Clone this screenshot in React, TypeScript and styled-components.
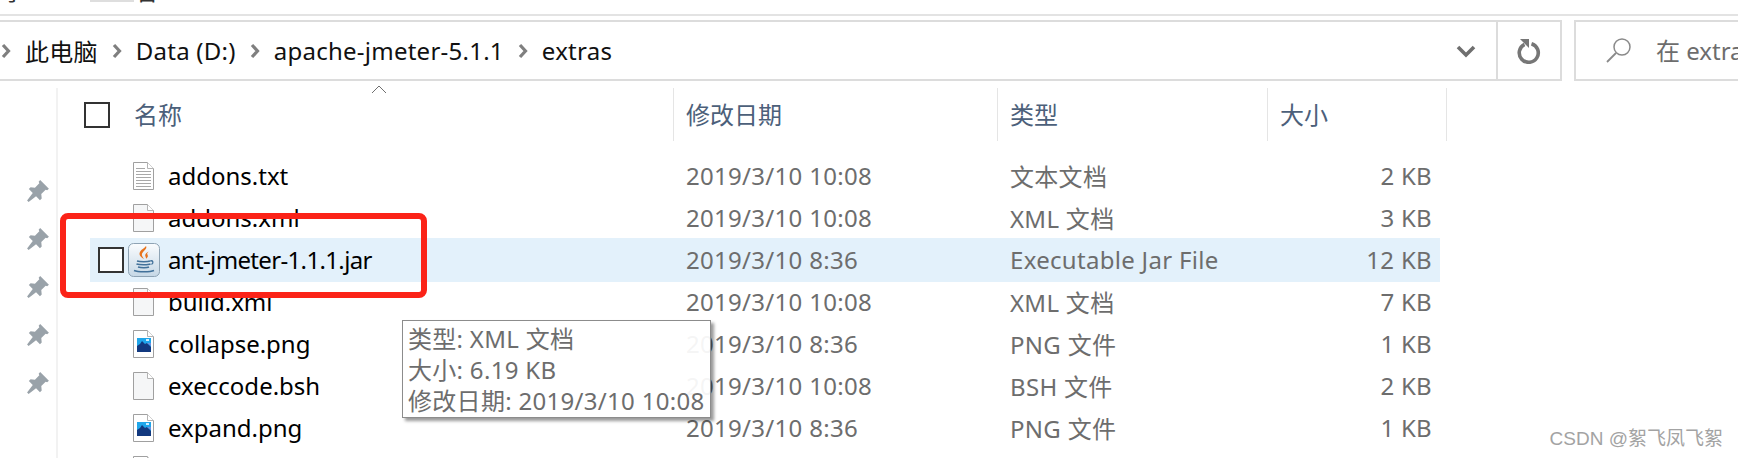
import React from 'react';
import styled, { createGlobalStyle } from 'styled-components';

const GlobalStyle = createGlobalStyle`
  html, body {
    margin: 0;
    padding: 0;
    background: #ffffff;
  }
  body {
    width: 1738px;
    height: 458px;
    overflow: hidden;
    font-family: "Noto Sans", "Noto Sans CJK SC", sans-serif;
  }
`;

const Page = styled.div`
  position: relative;
  width: 1738px;
  height: 458px;
  overflow: hidden;
  background: #fff;
`;

const Ribbon = styled.div`
  height: 14px;
  border-bottom: 2px solid #e3e3e3;
  display: flex;
  padding-left: 2px;
  overflow: hidden;
  font-size: 24px;
  line-height: 24px;
  color: #333;
`;

const RibbonLabel = styled.span`
  margin-top: -21px;
  width: 88px;
`;

const RibbonTab = styled.span`
  height: 2px;
  width: 44px;
  background: #dedede;
`;

const AddressRow = styled.div`
  display: flex;
  height: 61px;
  margin-top: 4px;
  gap: 12px;
`;

const Breadcrumb = styled.div`
  width: 1564px;
  margin-left: -2px;
  box-sizing: border-box;
  border: 2px solid #dcdcdc;
  display: flex;
  align-items: center;
`;

const Crumbs = styled.div`
  flex: 1;
  display: flex;
  align-items: center;
  gap: 14px;
  padding: 0 0 0 1px;
  font-size: 24px;
  letter-spacing: 0.25px;
  color: #111;
`;

const CrumbArrow = styled.svg`
  width: 10px;
  height: 16px;
  flex: none;
`;

const DropButton = styled.div`
  width: 60px;
  display: flex;
  justify-content: center;
`;

const RefreshButton = styled.div`
  width: 62px;
  align-self: stretch;
  border-left: 2px solid #dcdcdc;
  display: flex;
  align-items: center;
  justify-content: center;
`;

const SearchBox = styled.div`
  flex: 1;
  box-sizing: border-box;
  border: 2px solid #dcdcdc;
  border-right: none;
  display: flex;
  align-items: center;
  padding: 0 0 2px 30px;
  gap: 24px;
  font-size: 24px;
  color: #6d6d6d;
  white-space: nowrap;
  overflow: hidden;
`;

const SearchIcon = styled.svg`
  width: 26px;
  height: 26px;
  flex: none;
`;

const Body = styled.div`
  display: flex;
  margin-top: 7px;
`;

const NavRail = styled.div`
  width: 58px;
  height: 370px;
  flex: none;
  border-right: 2px solid #f2f2f2;
  display: flex;
  flex-direction: column;
  gap: 24px;
  padding: 91px 0 0 26px;
  box-sizing: border-box;
  margin-right: 32px;
`;

const PinIcon = styled.svg`
  width: 24px;
  height: 24px;
  flex: none;
`;

const List = styled.div`
  width: 1350px;
`;

const columns = '583px 324px 270px 173px';

const HeaderRow = styled.div`
  display: grid;
  grid-template-columns: ${columns};
  height: 53px;
  margin-bottom: 14px;
  font-size: 24px;
  color: #4c607a;
`;

const HeaderCell = styled.div<{ $first?: boolean }>`
  position: relative;
  display: flex;
  align-items: center;
  gap: 24px;
  padding-left: ${p => (p.$first ? '0' : '12px')};
  border-left: ${p => (p.$first ? 'none' : '1px solid #e5e5e5')};
`;

const HeaderLabel = styled.span`
  margin-top: -2px;
`;

const SizeHeaderCell = styled(HeaderCell)`
  width: 180px;
  box-sizing: border-box;
  border-right: 1px solid #e5e5e5;
`;

const SortCaret = styled.svg`
  position: absolute;
  left: 281px;
  top: -3px;
  width: 16px;
  height: 9px;
`;

const CheckBox = styled.span<{ $shift?: number }>`
  display: block;
  width: 26px;
  height: 26px;
  flex: none;
  box-sizing: border-box;
  border: 2px solid #333;
  background: #fff;
  margin-left: ${p => p.$shift ?? 0}px;
`;

const Row = styled.div<{ $selected?: boolean }>`
  display: grid;
  grid-template-columns: ${columns};
  align-items: center;
  height: ${p => (p.$selected ? '44px' : '42px')};
  margin: ${p => (p.$selected ? '-1px 0' : '0')};
  background: ${p => (p.$selected ? '#e3f1fb' : 'transparent')};
  font-size: 24px;
  letter-spacing: 0.3px;
  color: #6d6d6d;
`;

const NameCell = styled.div<{ $selected?: boolean }>`
  display: flex;
  align-items: center;
  padding-left: ${p => (p.$selected ? '8px' : '43px')};
  gap: ${p => (p.$selected ? '4px' : '14px')};
  color: #000;
  letter-spacing: ${p => (p.$selected ? '-0.65px' : '0')};
`;

const NameText = styled.span`
  margin-top: -2px;
`;

const DateCell = styled.div`
  padding: 0 0 2px 13px;
`;

const SizeCell = styled.div`
  text-align: right;
  padding: 0 8px 2px 0;
`;

const FileGlyph = styled.svg`
  width: 21px;
  height: 28px;
  flex: none;
`;

const JarGlyph = styled.svg`
  width: 32px;
  height: 34px;
  flex: none;
  margin-right: 4px;
`;

const RedMark = styled.div`
  position: absolute;
  left: 60px;
  top: 213px;
  width: 367px;
  height: 85px;
  box-sizing: border-box;
  border: 6px solid #fb2318;
  border-radius: 8px;
`;

const Tooltip = styled.div`
  position: absolute;
  left: 402px;
  top: 320px;
  width: 309px;
  height: 98px;
  box-sizing: border-box;
  border: 1px solid #8c8c8c;
  background: rgba(255, 255, 255, 0.93);
  box-shadow: 3px 3px 3px rgba(0, 0, 0, 0.4);
  padding: 2px 0 0 5px;
  font-size: 24px;
  letter-spacing: 0.3px;
  line-height: 31px;
  color: #6d6d6d;
  white-space: nowrap;
`;

const Watermark = styled.div`
  position: absolute;
  right: 15px;
  bottom: 8px;
  font-family: "Liberation Sans", "Noto Sans CJK SC", sans-serif;
  font-size: 19px;
  color: #a3a3a3;
`;

type Kind = 'text' | 'blank' | 'image' | 'jar';

const files: { name: string; date: string; type: string; size: string; kind: Kind }[] = [
  { name: 'addons.txt', date: '2019/3/10 10:08', type: '文本文档', size: '2 KB', kind: 'text' },
  { name: 'addons.xml', date: '2019/3/10 10:08', type: 'XML 文档', size: '3 KB', kind: 'blank' },
  { name: 'ant-jmeter-1.1.1.jar', date: '2019/3/10 8:36', type: 'Executable Jar File', size: '12 KB', kind: 'jar' },
  { name: 'build.xml', date: '2019/3/10 10:08', type: 'XML 文档', size: '7 KB', kind: 'blank' },
  { name: 'collapse.png', date: '2019/3/10 8:36', type: 'PNG 文件', size: '1 KB', kind: 'image' },
  { name: 'execcode.bsh', date: '2019/3/10 10:08', type: 'BSH 文件', size: '2 KB', kind: 'blank' },
  { name: 'expand.png', date: '2019/3/10 8:36', type: 'PNG 文件', size: '1 KB', kind: 'image' },
  { name: '', date: '', type: '', size: '', kind: 'text' },
];

const Arrow = () => (
  <CrumbArrow viewBox="0 0 10 16">
    <path d="M2 2l5.5 6L2 14" fill="none" stroke="#7f7f7f" strokeWidth="3.2" />
  </CrumbArrow>
);

const Pin = () => (
  <PinIcon viewBox="0 0 22 22">
    <path
      d="M13 1l8 8-1.6 1.4-1.4-.6-4 4 .4 4-1.6 1.6-3.6-3.6L2.4 21 1 19.6l5.2-6.8L2.6 9.2 4.2 7.600l4 .4 4-4-.6-1.400z"
      fill="#99a2a9"
    />
  </PinIcon>
);

const FileIcon = ({ kind }: { kind: Kind }) => (
  <FileGlyph viewBox="0 0 21 28">
    <path d="M.5.5h14l6 6v21H.5z" fill={kind === 'blank' ? '#f5f6f7' : '#fff'} stroke="#a0a0a0" />
    <path d="M14.5.5v6h6" fill="#fff" stroke="#b4b4b4" />
    {kind === 'text' &&
      [6, 9, 12, 15, 18, 21, 24].map(y => (
        <path key={y} d={`M3 ${y}.5h${y === 6 ? 9 : 15}`} stroke="#a8a8a8" />
      ))}
    {kind === 'image' && (
      <g>
        <rect x="4" y="8" width="14" height="14" fill="#1fa6ea" />
        <path d="M4 22v-6l3-2 2-3 3 3 2-1 4 4v5z" fill="#12397f" />
        <path d="M14 13l4 3v-3z" fill="#6f8fe0" />
        <rect x="13" y="9" width="3" height="2" fill="#cfeeff" />
      </g>
    )}
  </FileGlyph>
);

const JarIcon = () => (
  <JarGlyph viewBox="0 0 32 34">
    <defs>
      <linearGradient id="jarBg" x1="0" y1="0" x2="0" y2="1">
        <stop offset="0" stopColor="#fafcfe" />
        <stop offset="1" stopColor="#c6d8e6" />
      </linearGradient>
    </defs>
    <rect x=".5" y=".5" width="31" height="33" rx="5" fill="url(#jarBg)" stroke="#8ea3b4" />
    <path d="M18 3c2 3.500-5 5.500-4 9.500.4 1.500 1.500 2.500 2 3.500-3.500-2-6-4.500-3.500-8 1.200-1.700 4-2.500 5.500-5z" fill="#e8731c" />
    <path d="M21 8.500c-3 1.500-4.500 2.800-3.500 5 .4.800.6 1.400.5 2.200 2.500-1.700 2-3.400 1.200-4.700-.3-.8.5-1.500 1.800-2.500z" fill="#e8731c" />
    <path d="M9 18c3 1 11 1 13 0M8.500 21c3 1 12 1 14 0M10 24c3 1 9 1 11 0M6 27.500c4 1.800 16 1.800 20 0" fill="none" stroke="#41719a" strokeWidth="1.500" />
    <path d="M22 18c3-1 4 1.500 1.500 3.500" fill="none" stroke="#41719a" strokeWidth="1.300" />
  </JarGlyph>
);

export default function App() {
  return (
    <Page>
      <GlobalStyle />
      <Ribbon>
        <RibbonLabel>享</RibbonLabel>
        <RibbonTab />
        <RibbonLabel>看</RibbonLabel>
      </Ribbon>
      <AddressRow>
        <Breadcrumb>
          <Crumbs>
            <Arrow />
            <span>此电脑</span>
            <Arrow />
            <span>Data (D:)</span>
            <Arrow />
            <span>apache-jmeter-5.1.1</span>
            <Arrow />
            <span>extras</span>
          </Crumbs>
          <DropButton>
            <svg width="20" height="14" viewBox="0 0 20 14">
              <path d="M2 3l8 8 8-8" fill="none" stroke="#6f6f6f" strokeWidth="3.600" />
            </svg>
          </DropButton>
          <RefreshButton>
            <svg width="24" height="26" viewBox="0 0 24 26">
              <path d="M7.500 6.300a9.500 9.500 0 1 0 7 -.6" fill="none" stroke="#767676" strokeWidth="3.600" />
              <path d="M3 1h9v9z" fill="#767676" />
            </svg>
          </RefreshButton>
        </Breadcrumb>
        <SearchBox>
          <SearchIcon viewBox="0 0 26 26">
            <circle cx="16" cy="10" r="8" fill="none" stroke="#8a8a8a" strokeWidth="1.500" />
            <path d="M10 16L1 25" stroke="#8a8a8a" strokeWidth="1.800" />
          </SearchIcon>
          <span>在 extras 中搜索</span>
        </SearchBox>
      </AddressRow>
      <Body>
        <NavRail>
          {[0, 1, 2, 3, 4].map(i => (
            <Pin key={i} />
          ))}
        </NavRail>
        <List>
          <HeaderRow>
            <HeaderCell $first>
              <CheckBox $shift={-6} />
              <HeaderLabel>名称</HeaderLabel>
              <SortCaret viewBox="0 0 16 9">
                <path d="M1 8l7-7 7 7" fill="none" stroke="#6f6f6f" strokeWidth="1" />
              </SortCaret>
            </HeaderCell>
            <HeaderCell>
              <HeaderLabel>修改日期</HeaderLabel>
            </HeaderCell>
            <HeaderCell>
              <HeaderLabel>类型</HeaderLabel>
            </HeaderCell>
            <SizeHeaderCell>
              <HeaderLabel>大小</HeaderLabel>
            </SizeHeaderCell>
          </HeaderRow>
          {files.map((f, i) => {
            const selected = f.kind === 'jar';
            return (
              <Row key={i} $selected={selected}>
                <NameCell $selected={selected}>
                  {selected && <CheckBox />}
                  {selected ? <JarIcon /> : <FileIcon kind={f.kind} />}
                  <NameText>{f.name}</NameText>
                </NameCell>
                <DateCell>{f.date}</DateCell>
                <DateCell>{f.type}</DateCell>
                <SizeCell>{f.size}</SizeCell>
              </Row>
            );
          })}
        </List>
      </Body>
      <RedMark />
      <Tooltip>
        类型: XML 文档
        <br />
        大小: 6.19 KB
        <br />
        修改日期: 2019/3/10 10:08
      </Tooltip>
      <Watermark>CSDN @絮飞凤飞絮</Watermark>
    </Page>
  );
}
